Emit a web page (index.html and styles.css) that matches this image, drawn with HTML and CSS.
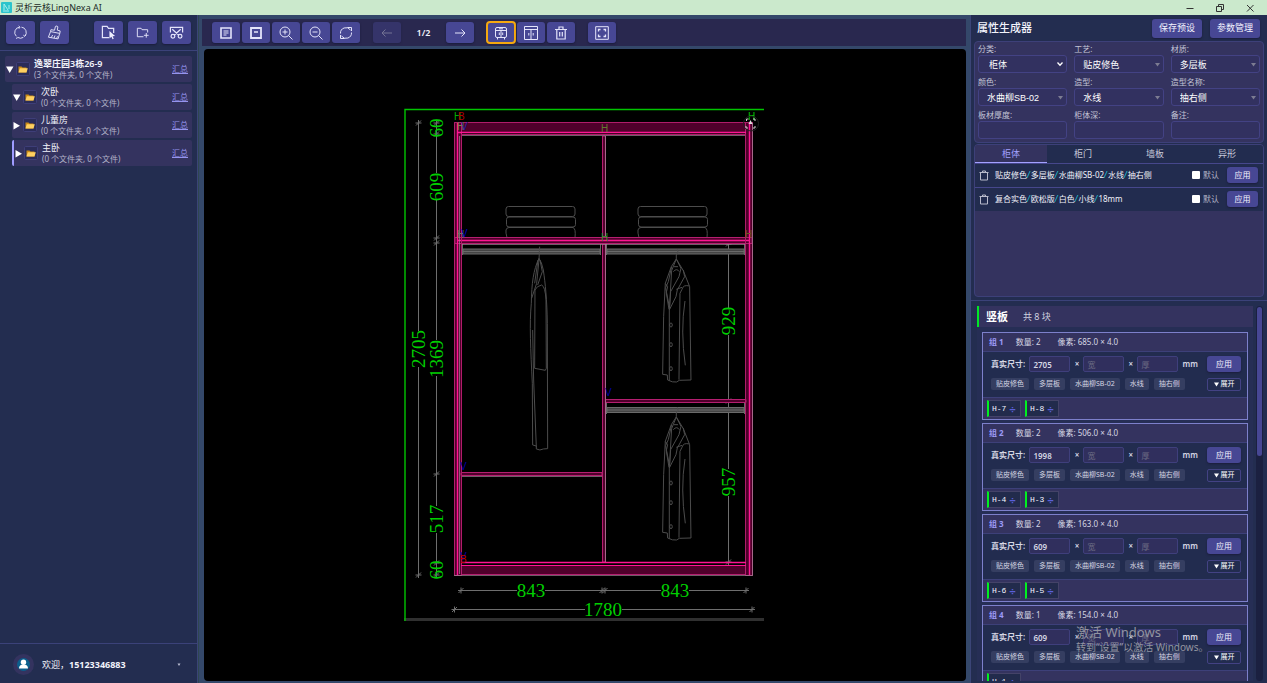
FILE: index.html
```html
<!DOCTYPE html>
<html lang="zh-CN">
<head>
<meta charset="utf-8">
<title>灵析云核LingNexa AI</title>
<link rel="stylesheet" href="styles.css">
</head>
<body>
<header class="titlebar">
  <svg class="logo" viewBox="0 0 11 11"><rect width="11" height="11" rx="1" fill="#2cc4cc"/><path d="M3 2v6M3 2l4 6M8 3v4M2 9h6" stroke="#a8f0ee" fill="none"/></svg>
  <span class="app-name">灵析云核LingNexa AI</span>
  <svg class="win" viewBox="0 0 10 10"><path d="M1.500 5.500h7"/></svg>
  <svg class="win" viewBox="0 0 10 10"><path d="M1.500 3.500h5v5h-5zM3.500 3.500v-2h5v5h-2"/></svg>
  <svg class="win" viewBox="0 0 10 10"><path d="M2 2l6.500 6.500M8.500 2L2 8.500"/></svg>
</header>
<div class="app">
  <aside class="sidebar">
    <div class="side-tools">
      <button class="btn side-btn" aria-label="刷新"><svg viewBox="0 0 16 16"><path d="M3.500 12A5.700 5.700 0 0 1 7 2.300M9 2.300a5.700 5.700 0 0 1 3.500 9.700M11 13.200a5.500 5.500 0 0 1-6 0M6 1l1.500 1.300L6.300 4M14 10.500l-1.600 1.500-1.400-1.200M3.800 14.800l.8-1.800"/></svg></button>
      <button class="btn side-btn" aria-label="清理"><svg viewBox="0 0 16 16"><path d="M9 1.500q2-1.200 2.600.4L11 5.500l3 .8-.3 2.700-10-2L4.200 5l3.800.6zM3.700 7.200L1.500 13l10.300 1.800L13.500 9M4.500 13.500L6 10.700M7.500 14l1-2.800M10.200 14.500l1-2.500"/></svg></button>
      <span class="side-gap"></span>
      <button class="btn side-btn" aria-label="选择文件夹"><svg viewBox="0 0 16 16"><path d="M8.500 13.500H1.500v-12h5l1.500 2h5.500v5" stroke-width="1.300"/><path d="M9 6.500l6 5.300-2.600.2 1.200 2.700-1.300.6-1.200-2.700L9 14.300z" fill="#eef" stroke="none"/></svg></button>
      <button class="btn side-btn" aria-label="新建文件夹"><svg viewBox="0 0 16 16"><path d="M9 12.500H2.500v-9h4l1 1.500h6v3M12 8.500v5M9.500 11h5"/></svg></button>
      <button class="btn side-btn" aria-label="剪切"><svg viewBox="0 0 16 16"><path d="M1.500 8V2.500h13V8M3.500 4.500l7 6.500M12.500 4.500l-7 6.500" stroke-width="1.300"/><circle cx="4.200" cy="12" r="2" stroke-width="1.300"/><circle cx="11.800" cy="12" r="2" stroke-width="1.300"/></svg></button>
    </div>
    <nav class="tree" id="tree"></nav>
    <div class="user">
      <svg class="avatar" viewBox="0 0 21 21"><circle cx="10.500" cy="10.500" r="10.500" fill="#34335f"/><circle cx="10.500" cy="10.500" r="6.500" fill="#0b5f8d"/><circle cx="10.500" cy="8.200" r="2.700" fill="#fff"/><path d="M6 14.500q0-4 4.500-4t4.500 4z" fill="#fff"/></svg>
      <span class="user-name">欢迎，<b>15123346883</b></span>
      <svg class="user-more" viewBox="0 0 6 6"><path d="M1.500 1.500h3L3 4z" fill="#b8bcd0"/></svg>
    </div>
  </aside>

  <main class="stage">
    <div class="toolbar">
      <div class="tools">
        <button class="btn tool" aria-label="显示文字"><svg viewBox="0 0 14 14"><path d="M2 2h10v10H2z" stroke-width="1.600"/><path d="M4.500 5h5M4.500 7h5M4.500 9h3"/></svg></button>
        <button class="btn tool" aria-label="隐藏文字"><svg viewBox="0 0 14 14"><path d="M2 2h10v10H2z" stroke-width="1.800"/><path d="M5 6h4" stroke-width="1.500"/></svg></button>
        <button class="btn tool" aria-label="放大"><svg viewBox="0 0 14 14"><circle cx="6" cy="6" r="5"/><path d="M9.500 9.500l4 4M6 3.500v5M3.500 6h5"/></svg></button>
        <button class="btn tool" aria-label="缩小"><svg viewBox="0 0 14 14"><circle cx="6" cy="6" r="5"/><path d="M9.500 9.500l4 4M3.500 6h5"/></svg></button>
        <button class="btn tool" aria-label="重置"><svg viewBox="0 0 14 14"><path d="M1.500 7.500A5.500 5.500 0 0 1 11.500 4M12.500 6.500A5.500 5.500 0 0 1 2.500 10M8.500 1.500h4V5M5.500 12.500h-4V9"/></svg></button>
      </div>
      <div class="tools">
        <button class="btn tool dim" disabled aria-label="上一页"><svg viewBox="0 0 14 14"><path d="M12 7H2M5.500 3.500L2 7l3.500 3.500"/></svg></button>
        <span class="page">1/2</span>
        <button class="btn tool" aria-label="下一页"><svg viewBox="0 0 14 14"><path d="M2 7h10M8.500 3.500L12 7l-3.500 3.500"/></svg></button>
      </div>
      <div class="tools">
        <button class="btn tool active" aria-label="柜体"><svg viewBox="0 0 14 14"><rect x="1.500" y="1.500" width="11" height="10" rx="1.500"/><path d="M1.500 4.500h11M7 4.500v7M3.500 11.500v2M10.500 11.500v2M5.300 6.500v2.500M8.700 6.500v2.500M5 2.800h4"/></svg></button>
        <button class="btn tool" aria-label="柜门"><svg viewBox="0 0 14 14"><path d="M.5.500h13v13H.5zM.5 3.500h13M7 3.500v10M4.800 7v2.500M9.200 7v2.500"/></svg></button>
        <button class="btn tool" aria-label="删除"><svg viewBox="0 0 14 14"><path d="M1 3.500h12M5 3V1h4v2M2.800 3.500V13h8.400V3.500M5.700 6v4.500M8.300 6v4.500" stroke-width="1.200"/></svg></button>
      </div>
      <button class="btn tool" aria-label="全屏"><svg viewBox="0 0 14 14"><path d="M.7.700h12.600v12.600H.700z"/><path d="M3.500 5.500v-2h2M8.500 3.500h2v2M10.500 8.500v2h-2M5.500 10.500h-2v-2" stroke-width="1.300"/></svg></button>
    </div>
    <div class="canvas">
      <svg class="drawing" viewBox="404 108 362 514" role="img" aria-label="衣柜立面图">
        <defs>
          <g id="coat" transform="translate(400 250) scale(.3333)">
            <path d="M832-2q6 10-3 17v12l-15 23-18 50-5 100-3 173 14 2 1 15q15 8 27 6l8-5 35-1-4-280-19-48-21-35"/>
            <path d="M829 27l-14 35-7 118M829 27l14 28-6 25-25 45-3 50M850 60l4 20-22 40-4 20-20 40V392M815 50l-10 45-8 18 12 62M820 65q10-12 18 0M822 50h12M796 100l7 10-4 18 8 50M868 108q-18-5-22 10l-6 12-3 259M855 153q-14 90 1 193M829 118l17-6"/>
            <ellipse cx="813" cy="225" rx="4" ry="6"/><ellipse cx="813" cy="284" rx="4" ry="6"/><ellipse cx="813" cy="356" rx="4" ry="6"/>
          </g>
          <g id="towels"><rect x="506" y="206.500" width="69" height="10" rx="2.500"/><rect x="506.500" y="217" width="69" height="10" rx="2.500"/><path d="M507 237.500q-3-10 2-10h64q3 1 2 10"/></g>
          <path id="tick" d="M-3 0h6M0-3v6M2.500-2.500l-5 5"/>
          <path id="rod" d="M0 0h137v5H0zM0 2.500h137"/>
        </defs>
        <path d="M404 619.500h360" stroke="#303030" stroke-width="3"/>
        <path d="M764 109.500H405V621" fill="none" stroke="#00c400" stroke-width="1.400"/>

        <g class="cad-gray">
          <path d="M418.500 123v208M418.500 367v208M436.500 123v50M436.500 200v38M436.500 243v97M436.500 376v98M436.500 474v32M436.500 533v42M728.500 243v65M728.500 335v134M728.500 496v66M461 590.500h56M545 590.500h57M604 590.500h57M689 590.500h57M454 609.500h131M622 609.500h131"/>
          <use href="#tick" x="418.500" y="123"/><use href="#tick" x="418.500" y="575"/>
          <use href="#tick" x="436.500" y="123"/><use href="#tick" x="436.500" y="134"/><use href="#tick" x="436.500" y="238"/><use href="#tick" x="436.500" y="243"/><use href="#tick" x="436.500" y="474"/><use href="#tick" x="436.500" y="563"/><use href="#tick" x="436.500" y="575"/>
          <use href="#tick" x="728.500" y="244"/><use href="#tick" x="728.500" y="401"/><use href="#tick" x="728.500" y="562"/>
          <use href="#tick" x="461" y="590.500"/><use href="#tick" x="602" y="590.500"/><use href="#tick" x="605" y="590.500"/><use href="#tick" x="746" y="590.500"/><use href="#tick" x="454.500" y="609.500"/><use href="#tick" x="752" y="609.500"/>
        </g>
        <g class="cad-rod">
          <use href="#rod" x="463" y="249"/><use href="#rod" x="607" y="249"/><use href="#rod" x="607" y="407.500"/>
          <path d="M462.500 244v11M600.500 244v11M606.500 244v11M744.500 244v11M606.500 403v11M744.500 403v11"/>
        </g>
        <g class="cad-soft">
          <use href="#towels"/><use href="#towels" x="132"/>
          <g transform="translate(400 250) scale(.3333)">
            <path d="M419-10l-2 40M417 25c-17 35-22 75-23 135-6 60-2 140 3 240l1 185 11 3v9q11 6 21 0l13-1-1-376c-1-70-6-120-12-160q-5-25-13-35"/>
            <path d="M405 120l-1 235 32 6 3-6-1-205q-2-40-13-45-15 3-20 15zM417 30l-7 70-15 45M420 30l7 35-14 40M414 30l-10 70M398 240l3 150 8 200"/>
          </g>
          <use href="#coat"/><use href="#coat" y="158"/>
        </g>

        <g class="board">
          <path d="M454.500 122.500h298v10h-298z"/><path d="M461.500 565.500h284v9h-284z"/>
          <path d="M454.500 122.500h7v453h-7zM745.500 122.500h7v453h-7z"/>
          <path d="M455 237.500h297v6H455zM461 472.500h141v3H461zM605 399.500h141v3H605z"/>
          <path d="M602.500 136v101.500h3V136zM602.500 244v318h3V244z"/>
        </g>
        <g class="edge"><path d="M457.500 123v452M749.500 123v452M458 132.500h288M461 562.500h285M458 240.500h292" stroke-width="1.400"/><path d="M461 565.500h285"/></g>
        <g class="edge-gray"><path d="M459.500 136v438M752.500 123v452M461 135.500h285M461 244.500h285M461 476.500h141M605.500 136v101M605.500 244v318M454 575.500h299"/></g>
        <g class="edge-dull"><path d="M461 134.500h285M455 122.500h298M461.500 135v427M745.500 135v427"/></g>

        <g class="dims">
          <text transform="translate(425 349) rotate(-90)">2705</text>
          <text transform="translate(443 359) rotate(-90)">1369</text>
          <text transform="translate(443 187) rotate(-90)">609</text>
          <text transform="translate(443 128) rotate(-90)">60</text>
          <text transform="translate(443 519) rotate(-90)">517</text>
          <text transform="translate(443 570) rotate(-90)">60</text>
          <text transform="translate(735 321) rotate(-90)">929</text>
          <text transform="translate(735 482) rotate(-90)">957</text>
          <text x="531" y="597">843</text><text x="675" y="597">843</text><text x="603" y="616">1780</text>
        </g>
        <g class="marks">
          <text x="454" y="120" fill="#00b000">H</text><text x="458" y="120" fill="#b00000">B</text>
          <text x="457" y="130" fill="#778050">H</text><text x="461" y="130" fill="#2020a8">V</text>
          <text x="601" y="132" fill="#617a30">H</text><text x="748" y="120" fill="#00c400">H</text>
          <text x="457" y="238" fill="#617a60">H</text><text x="461" y="237" fill="#0000c0">V</text>
          <text x="601" y="241" fill="#30902c">H</text><text x="745" y="238" fill="#6a5a20">H</text>
          <text x="605" y="396" fill="#0000a8">V</text><text x="460" y="470" fill="#0000a8">V</text>
          <text x="460" y="560" fill="#0000a8">V</text><text x="460" y="563" fill="#c00000">B</text>
        </g>
        <g fill="none" stroke="#d0d0d0"><circle cx="751" cy="123.500" r="7.500" stroke="#222"/><path d="M746.500 121v-2h2M753 119h2v2M755 126v2h-2M748 128h-2v-2"/><path d="M750.500 120l2 4h-4z" fill="#ddd" stroke="none"/></g>
      </svg>
    </div>
  </main>

  <aside class="panel">
    <div class="panel-head">
      <h1>属性生成器</h1>
      <button class="btn head-btn">保存预设</button>
      <button class="btn head-btn">参数管理</button>
    </div>
    <form class="fields">
      <div class="field"><label for="f1">分类:</label><div class="pick"><select id="f1"><option>柜体</option></select><svg class="chev" viewBox="0 0 8 8"><path d="M1.500 2.500L4 5.200l2.500-2.700" fill="none" stroke="#fff" stroke-width="1.300"/></svg></div></div>
      <div class="field"><label for="f2">工艺:</label><div class="pick"><select id="f2"><option>贴皮修色</option></select><svg class="chev" viewBox="0 0 8 8"><path d="M2 3h5L4.500 6.500z" fill="#7c7c92"/></svg></div></div>
      <div class="field"><label for="f3">材质:</label><div class="pick"><select id="f3"><option>多层板</option></select><svg class="chev" viewBox="0 0 8 8"><path d="M2 3h5L4.500 6.500z" fill="#7c7c92"/></svg></div></div>
      <div class="field"><label for="f4">颜色:</label><div class="pick"><select id="f4"><option>水曲柳SB-02</option></select><svg class="chev" viewBox="0 0 8 8"><path d="M2 3h5L4.500 6.500z" fill="#7c7c92"/></svg></div></div>
      <div class="field"><label for="f5">造型:</label><div class="pick"><select id="f5"><option>水线</option></select><svg class="chev" viewBox="0 0 8 8"><path d="M2 3h5L4.500 6.500z" fill="#7c7c92"/></svg></div></div>
      <div class="field"><label for="f6">造型名称:</label><div class="pick"><select id="f6"><option>抽右侧</option></select><svg class="chev" viewBox="0 0 8 8"><path d="M2 3h5L4.500 6.500z" fill="#7c7c92"/></svg></div></div>
      <div class="field"><label for="f7">板材厚度:</label><input id="f7" type="text"></div>
      <div class="field"><label for="f8">柜体深:</label><input id="f8" type="text"></div>
      <div class="field"><label for="f9">备注:</label><input id="f9" type="text"></div>
    </form>
    <section class="presets">
      <div class="tabs" role="tablist">
        <button role="tab" class="tab on" aria-selected="true">柜体</button><button role="tab" class="tab">柜门</button><button role="tab" class="tab">墙板</button><button role="tab" class="tab">异形</button>
      </div>
      <div class="preset">
        <svg class="bin" viewBox="0 0 10 11"><path d="M.5 2.500h9M3.500 2V1h3v1M1.500 2.500V10h7V2.500"/></svg>
        <span class="preset-name">贴皮修色<i>/</i>多层板<i>/</i>水曲柳SB-02<i>/</i>水线<i>/</i>抽右侧</span>
        <label class="default"><input type="checkbox">默认</label>
        <button class="btn apply">应用</button>
      </div>
      <div class="preset">
        <svg class="bin" viewBox="0 0 10 11"><path d="M.5 2.500h9M3.500 2V1h3v1M1.500 2.500V10h7V2.500"/></svg>
        <span class="preset-name">复合实色<i>/</i>欧松版<i>/</i>白色<i>/</i>小线<i>/</i>18mm</span>
        <label class="default"><input type="checkbox">默认</label>
        <button class="btn apply">应用</button>
      </div>
    </section>
    <section class="boards">
      <div class="board-list">
        <div class="board-head"><h2>竖板</h2><span>共 8 块</span></div>
        <div class="groups" id="groups"></div>
      </div>
      <div class="scroll"><div class="thumb"></div></div>
    </section>
  </aside>
</div>
<div class="activate"><p class="activate-title">激活 Windows</p><p class="activate-note">转到“设置”以激活 Windows。</p></div>
<script src="app.js"></script>
</body>
</html>
```
FILE: styles.css
```css
* { box-sizing: border-box; }
body {
  margin: 0; height: 100vh; overflow: hidden; display: flex; flex-direction: column;
  background: #232d50; color: #f2f3fb;
  font: 9px/12px "Noto Sans", "Noto Sans CJK SC", sans-serif;
}
h1, h2, p { margin: 0; }
button, input, select { font: inherit; color: inherit; margin: 0; padding: 0; }
.titlebar { height: 15px; flex: none; display: flex; align-items: center; background: #cbe9cc; color: #222b28; padding: 0 12px 0 1px; }
.logo { width: 11px; height: 11px; margin-right: 3px; }
.app-name { flex: 1; }
.win { width: 10px; height: 10px; margin-left: 20px; fill: none; stroke: #333; }
.app { flex: 1; min-height: 0; display: flex; }
.btn { border: 0; border-radius: 3px; background: #474794; color: #f4f4ff; box-shadow: 0 1px 2px #1a1d3c; display: flex; align-items: center; justify-content: center; }
.btn svg { fill: none; stroke: #e4e4fa; }

.sidebar { width: 198px; flex: none; display: flex; flex-direction: column; border-right: 1px solid #3b4577; }
.side-tools { display: flex; gap: 5px; padding: 6px; border-bottom: 1px solid #3b4279; }
.side-btn { width: 29px; height: 23px; }
.side-btn svg { width: 15px; height: 15px; }
.side-gap { flex: 1; }
.tree { flex: 1; display: flex; flex-direction: column; gap: 2px; padding: 5px 5px 0; }
.node { height: 26px; display: flex; align-items: center; background: #34335f; border-radius: 2px; padding-right: 4px; }
.child { margin-left: 7px; }
.picked { border-left: 2px solid #9f9cff; }
.twist { width: 9px; height: 9px; fill: #fff; }
.folder { width: 14px; height: 14px; margin: 0 4px 0 2px; }
.picked .folder { margin-left: 1px; }
.node-text { flex: 1; line-height: 11px; }
.node-name { display: block; font-size: 9px; }
.root .node-name { font-weight: 600; }
.node-count { display: block; font-size: 8px; color: #b5b6cb; white-space: nowrap; }
.node a { color: #9694ee; font-size: 8px; }
.user { height: 40px; display: flex; align-items: center; border-top: 1px solid #3b4279; padding: 2px 15px 0 13px; }
.avatar { width: 21px; height: 21px; margin-right: 8px; }
.user-name { flex: 1; }
.user-more { width: 6px; height: 6px; }

.stage { flex: 1; min-width: 0; display: flex; flex-direction: column; background: #34486a; padding: 4px 4px 2px 3px; border-left: 1px solid #2f4650; }
.toolbar { height: 27px; flex: none; display: flex; align-items: center; gap: 13px; padding-left: 10px; background: #29284f; }
.tools { display: flex; align-items: center; gap: 2px; }
.tool { width: 28px; height: 21px; }
.tool svg { width: 14px; height: 14px; }
.dim { opacity: .4; }
.page { width: 41px; text-align: center; font-weight: 600; }
.active { outline: 2px solid #f5a810; outline-offset: -1px; }
.canvas { flex: 1; min-height: 0; display: flex; align-items: center; justify-content: center; margin: 3px 0 0 2px; background: #000; border-radius: 4px; }
.drawing { width: 362px; height: 514px; flex: none; }
.cad-gray { fill: none; stroke: #6e6e6e; }
.cad-rod { fill: #444; stroke: #6a6a6a; }
.cad-soft { fill: none; stroke: #4c4c4c; }
.cad-soft g, #coat { stroke-width: 3; }
.board { fill: #50002b; stroke: #b51e70; }
.edge { fill: none; stroke: #ff1493; }
.edge-gray { fill: none; stroke: #a08695; opacity: .7; }
.edge-dull { fill: none; stroke: #b01c6a; }
.dims { fill: #00cf00; font: 19px "Liberation Serif", serif; text-anchor: middle; }
.marks { font: 10px "Liberation Sans", sans-serif; }

.panel { width: 297px; flex: none; display: flex; flex-direction: column; border-left: 1px solid #3b4577; }
.panel-head { height: 26px; flex: none; display: flex; align-items: center; gap: 8px; padding: 0 7px 0 6px; }
.panel-head h1 { flex: 1; font-size: 11px; font-weight: 500; }
.head-btn { width: 50px; height: 19px; }
.fields { display: grid; grid-template-columns: repeat(3, 1fr); gap: 3px 7px; margin: 0 3px; padding: 1px 3px 3px; background: #34335f; border: 1px solid #3d4079; border-radius: 4px; }
.field { display: grid; grid-template-rows: 12px 18px; font-size: 9px; min-width: 0; }
.field label { font-size: 8px; color: #c3c4d6; }
.pick { display: grid; }
.pick select, .pick .chev { grid-area: 1 / 1; }
.chev { width: 8px; height: 8px; justify-self: end; align-self: center; margin-right: 3px; pointer-events: none; }
.field select, .field input { width: 100%; min-width: 0; height: 18px; border: 1px solid #434284; border-radius: 3px; background: #323160; }
.field select { appearance: none; padding: 1px 8px 0; font-family: "Liberation Sans", "Noto Sans CJK SC", sans-serif; color: #fff; }
#f1 { padding-left: 10px; }
.presets { height: 153px; flex: none; margin: 1px 3px 0; background: #34335f; border: 1px solid #3d4079; border-radius: 4px; overflow: hidden; }
.tabs { display: grid; grid-template-columns: repeat(4, 1fr); }
.tab { height: 18px; border: 0; background: #222c4f; color: #c9cadb; }
.on { background: #34335f; color: #a3a1ff; border-bottom: 1px solid #a3a1ff; }
.preset { height: 24px; display: flex; align-items: center; padding: 0 5px 1px 4px; background: #222c4f; border: 1px solid #46478c; border-width: 1px 0 0; font-size: 8px; }
.bin { width: 10px; height: 11px; margin-right: 6px; fill: none; stroke: #b8bacb; }
.preset-name { flex: 1; white-space: nowrap; }
.preset-name i { color: #1fc8dc; padding: 0 1px 0 0; }
.default { display: flex; align-items: center; gap: 3px; color: #b3b5c8; margin-right: 8px; }
.default input { appearance: none; width: 8px; height: 8px; background: #fff; border-radius: 1px; }
.apply { width: 31px; height: 16px; font-size: 8px; }

.boards { flex: 1; min-height: 0; display: flex; gap: 3px; margin-top: 3px; padding: 5px 4px 2px 6px; border-top: 1px solid #3b4279; }
.board-list { flex: 1; min-width: 0; overflow: hidden; background: #262e55; }
.board-head { height: 21px; display: flex; align-items: center; gap: 15px; padding-left: 7px; background: #34335f; border-left: 2px solid #00e626; color: #cfd0df; }
.board-head h2 { font-size: 11px; color: #fff; }
.groups { display: flex; flex-direction: column; gap: 3px; padding: 5px; }
.group { flex: none; border: 1px solid #7d80cb; background: #34335f; font-size: 8px; color: #d6d7e4; }
.group-head { height: 18px; display: flex; align-items: center; gap: 12px; padding-left: 6px; }
.group-head b { color: #9c9af8; }
.group-head .px { margin-left: 5px; }
.group-body { background: #222c4f; border: 1px solid #3d4079; border-width: 1px 0; padding: 4px 6px 6px 8px; display: grid; gap: 5px; }
.line { display: flex; align-items: center; gap: 5px; height: 16px; }
.tags { height: 14px; }
.size { display: flex; flex: 1; align-items: center; justify-content: space-between; padding-right: 4px; font-weight: 600; }
.size input { width: 41px; height: 16px; padding: 0 3px; background: #302f5d; border: 1px solid #3f3f7c; border-radius: 2px; }
.size input::placeholder { color: #6b6b83; font-weight: 400; }
.use { width: 34px; height: 16px; font-size: 8px; }
.tag { height: 12px; padding: 0 5px; background: #353e61; border-radius: 2px; font-size: 7px; white-space: nowrap; }
.more { width: 34px; height: 13px; margin-left: auto; display: flex; align-items: center; justify-content: center; gap: 2px; background: #222c4f; border: 1px solid #434284; border-radius: 2px; font-size: 7px; white-space: nowrap; color: #fff; }
.more svg { width: 5px; height: 5px; fill: #fff; }
.chips { display: flex; gap: 4px; padding: 2px 4px; }
.chip { width: 34px; height: 17px; display: flex; align-items: center; gap: 2px; padding-left: 3px; background: #222b4c; border: 1px solid #444368; border-left: 2px solid #00f020; color: #f4f4ff; font-family: "Liberation Mono", monospace; font-size: 8px; }
.chip i { color: #5a60d8; font: bold 11px/12px "Liberation Sans", sans-serif; margin-left: 1px; }
.scroll { width: 7px; background: #1b2040; border-radius: 4px; padding: 1px; }
.thumb { height: 40%; background: #474794; border-radius: 3px; }

.activate { position: absolute; right: 60px; bottom: 28px; color: #9294a0; white-space: nowrap; pointer-events: none; width: 131px; }
.activate-title { font-size: 13px; line-height: 16px; }
.activate-note { font-size: 10px; line-height: 15px; }
```
FILE: app.js
```js
const folder = '<svg class="folder" viewBox="0 0 14 14"><rect x=".5" y=".5" width="13" height="13" rx="1" fill="#2b2c58" stroke="#3e3e78"/><path d="M2.500 10.500v-6h3l1 1h4v5z" fill="#c98a16"/><path d="M2.500 10.500l1.300-4.300h8l-1.300 4.300z" fill="#ffd061"/></svg>';
const nodes = [
  { name: '逸翠庄园3栋26-9', count: 3, open: true, cls: 'root' },
  { name: '次卧', count: 0, open: true, cls: 'child' },
  { name: '儿童房', count: 0, open: false, cls: 'child' },
  { name: '主卧', count: 0, open: false, cls: 'child picked' }
];
document.getElementById('tree').innerHTML = nodes.map(n => `
  <div class="node ${n.cls}">
    <svg class="twist" viewBox="0 0 9 9"><path d="${n.open ? 'M1 1.500h7.500L4.700 8z' : 'M1.500 1L8 4.700 1.500 8.500z'}"/></svg>${folder}
    <span class="node-text"><span class="node-name">${n.name}</span><span class="node-count">(${n.count} 个文件夹, 0 个文件)</span></span>
    <a href="#">汇总</a>
  </div>`).join('');

const groups = [
  { count: 2, px: '685.0', size: 2705, parts: ['H-7', 'H-8'] },
  { count: 2, px: '506.0', size: 1998, parts: ['H-4', 'H-3'] },
  { count: 2, px: '163.0', size: 609, parts: ['H-6', 'H-5'] },
  { count: 1, px: '154.0', size: 609, parts: ['H-1'] }
];
const tags = ['贴皮修色', '多层板', '水曲柳SB-02', '水线', '抽右侧'];
document.getElementById('groups').innerHTML = groups.map((g, i) => `
  <article class="group">
    <div class="group-head"><b>组 ${i + 1}</b><span>数量: ${g.count}</span><span class="px">像素: ${g.px} × 4.0</span></div>
    <div class="group-body">
      <div class="line">
        <div class="size"><label for="len${i}">真实尺寸:</label><input id="len${i}" type="text" value="${g.size}"><span>×</span><input type="text" placeholder="宽" aria-label="宽"><span>×</span><input type="text" placeholder="厚" aria-label="厚"><span>mm</span></div>
        <button class="btn use">应用</button>
      </div>
      <div class="line tags">${tags.map(t => `<span class="tag">${t}</span>`).join('')}<button class="more"><svg viewBox="0 0 5 5"><path d="M0 .5h5l-2.500 4z"/></svg>展开</button></div>
    </div>
    <div class="chips">${g.parts.map(p => `<span class="chip">${p}<i>÷</i></span>`).join('')}</div>
  </article>`).join('');
```
